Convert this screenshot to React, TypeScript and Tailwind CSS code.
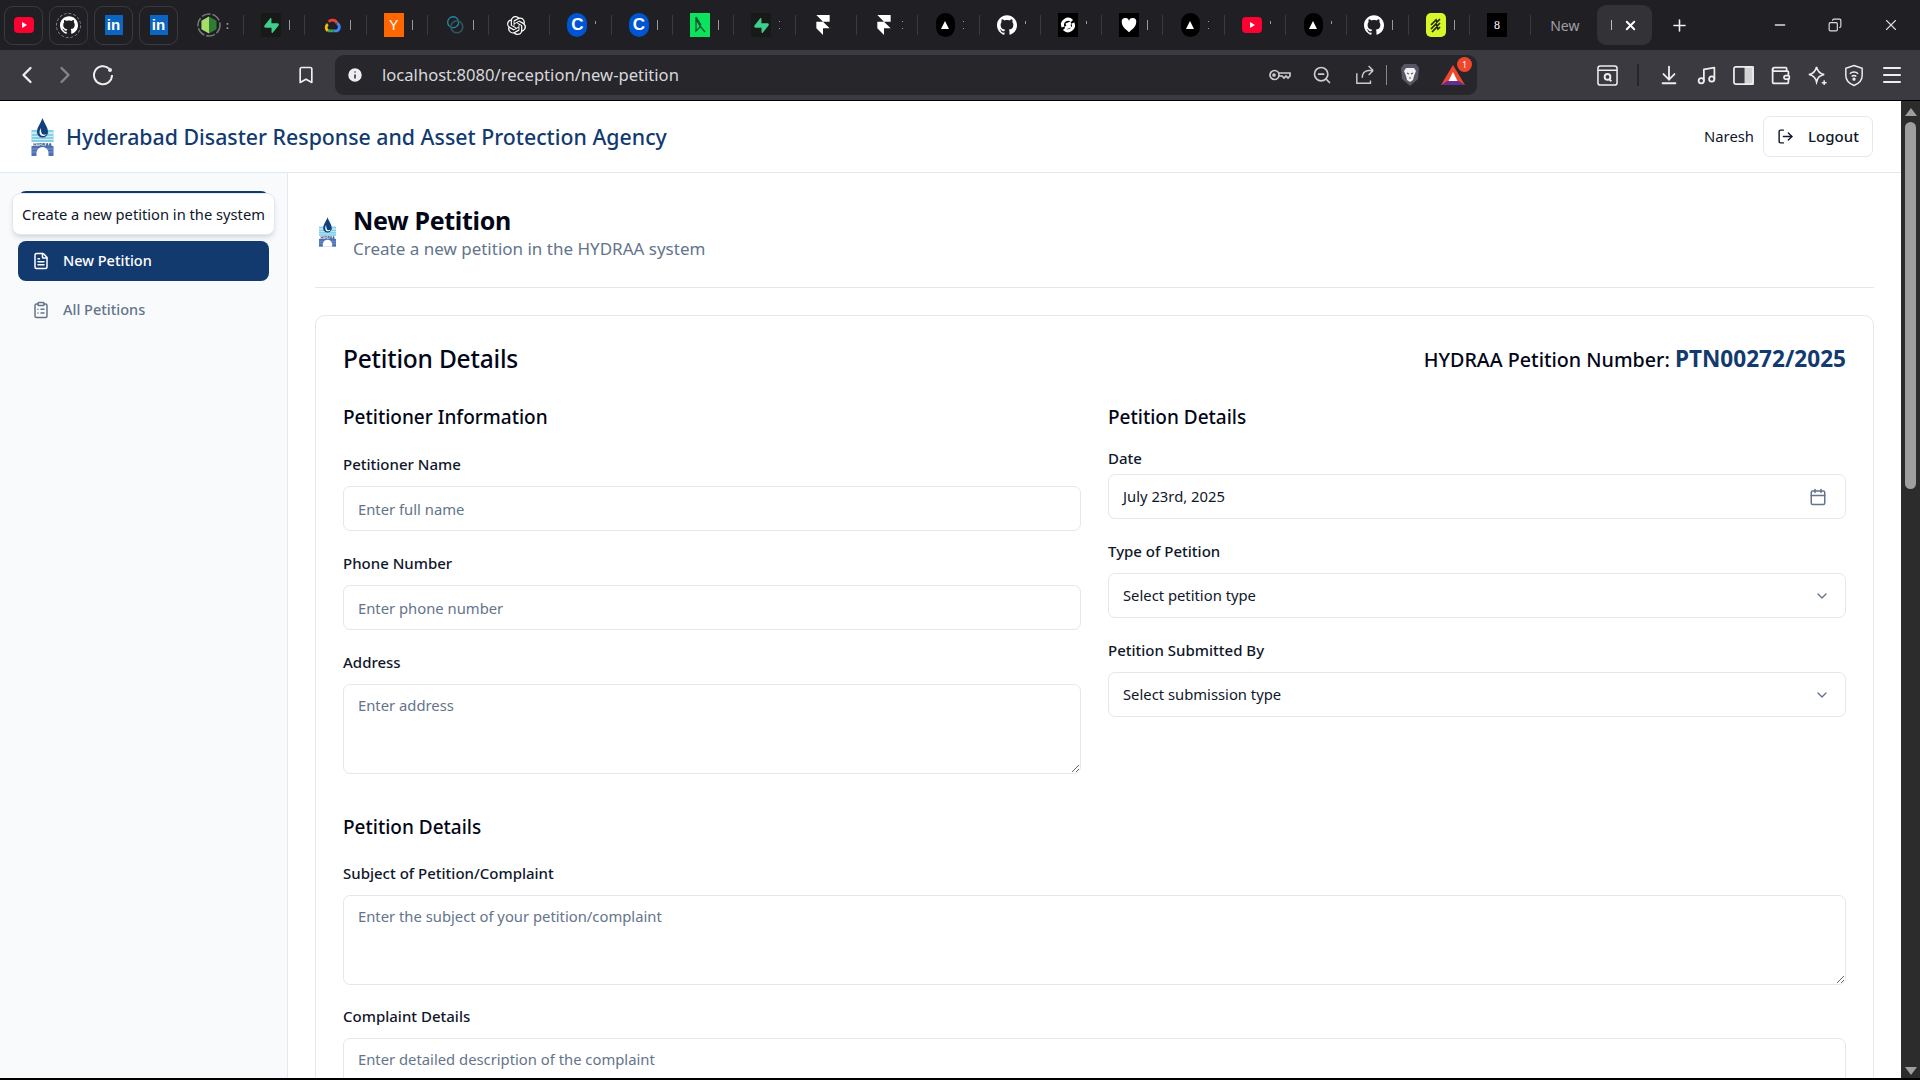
import React from 'react';
import {
  ArrowDownToLine,
  Calendar,
  ChevronDown,
  ChevronLeft,
  ChevronRight,
  ClipboardList,
  FileText,
  Info,
  LogOut,
  Menu,
  Minus,
  Music,
  Plus,
  Bookmark,
  Wallet,
  X,
  ZoomOut,
  Copy,
} from 'lucide-react';
import { SiFramer, SiGithub, SiOpenai, SiSupabase } from 'react-icons/si';

const navy = 'text-[#123a6f]';

const Youtube = () => (
  <svg viewBox="0 0 20 16" className="w-[20px] h-[16px]">
    <rect width="20" height="16" rx="4" fill="#ff0033" />
    <path d="M8 5l5 3-5 3z" fill="#fff" />
  </svg>
);

const Linkedin = () => (
  <span className="w-[18px] h-[20px] bg-[#0a66c2] text-white text-[15px] font-bold leading-[20px] text-center font-['Liberation_Sans',sans-serif]">
    in
  </span>
);

const Triangle = () => (
  <span className="w-[19px] h-[24px] rounded-full bg-black flex items-center justify-center">
    <svg viewBox="0 0 10 10" className="w-[10px] h-[10px]">
      <path d="M5 1l4 8H1z" fill="#fff" />
    </svg>
  </span>
);

const Node = () => (
  <svg viewBox="0 0 24 24" className="w-[24px] h-[24px] shrink-0">
    <circle cx="12" cy="12" r="11" fill="none" stroke="#777" strokeWidth="1.6" strokeDasharray="9 2" />
    <path d="M12 3.5l7.5 4.2v8.6L12 20.5l-7.5-4.2V7.700z" fill="#2f7d32" />
    <path d="M12 3.500v17l-7.500-4.200V7.700z" fill="#a5dc6a" />
  </svg>
);

const GoogleCloud = () => (
  <svg viewBox="0 0 24 20" className="w-[20px] h-[18px]">
    <path d="M8 6a6 6 0 0 1 10 2" fill="none" stroke="#ea4335" strokeWidth="3.4" />
    <path d="M18 8a5 5 0 0 1 0 9h-4" fill="none" stroke="#4285f4" strokeWidth="3.4" />
    <path d="M14 17H7" fill="none" stroke="#34a853" strokeWidth="3.4" />
    <path d="M7 17a5 5 0 0 1 0-8" fill="none" stroke="#fbbc05" strokeWidth="3.4" />
  </svg>
);

const Rings = () => (
  <svg viewBox="0 0 20 24" className="w-[20px] h-[22px]" fill="none">
    <circle cx="8" cy="9" r="6" stroke="#1f8fa8" strokeWidth="1.4" />
    <circle cx="12" cy="14" r="6.500" stroke="#34505f" strokeWidth="1.8" />
  </svg>
);

const Square = ({ bg, color, children }: { bg: string; color?: string; children: React.ReactNode }) => (
  <span
    className="w-[20px] h-[24px] flex items-center justify-center text-[12px] font-['Liberation_Serif',serif]"
    style={{ background: bg, color }}
  >
    {children}
  </span>
);

const Supabase = () => (
  <Square bg="#181a18" color="#3ecf8e">
    <SiSupabase size={15} />
  </Square>
);

const Coursera = () => (
  <span className="w-[20px] h-[24px] rounded-full bg-[#0056d2] flex items-center justify-center text-white text-[17px] font-bold font-['Liberation_Sans',sans-serif]">
    C
  </span>
);

const Github = () => <SiGithub size={20} color="#fff" />;
const Framer = () => <SiFramer size={20} color="#fff" />;

const PyCharmLike = () => (
  <Square bg="#0ce35c">
    <svg viewBox="0 0 20 24" className="w-[20px] h-[24px]" fill="none" stroke="#14532d" strokeWidth="1.3">
      <path d="M6 4v14l5-5M6 6l4 7 5 6M6 4l5 8" />
    </svg>
  </Square>
);

const Swirl = () => (
  <Square bg="#000">
    <svg viewBox="0 0 20 24" className="w-[20px] h-[24px]" fill="none" stroke="#fff" strokeWidth="3">
      <path d="M5 14a5.500 5.500 0 0 1 9-6M15 10a5.500 5.500 0 0 1-9 6M8 12l5-2M7 15l6-2" />
    </svg>
  </Square>
);

const Heart = () => (
  <Square bg="#000">
    <svg viewBox="0 0 20 24" className="w-[18px] h-[22px]">
      <path d="M10 20C5 16 2 13 2 9a4 4 0 0 1 8-1.500A4 4 0 0 1 18 9c0 4-3 7-8 11z" fill="#fff" />
    </svg>
  </Square>
);

const Lime = () => (
  <span className="w-[20px] h-[24px] rounded-[5px] bg-[#d7f72a] flex items-center justify-center">
    <svg viewBox="0 0 20 24" className="w-[20px] h-[24px]" fill="none" stroke="#1f2a10" strokeWidth="1.700">
      <path d="M5 12l5-5 1 2 3-3M5 16l5-5 1 2 3-3M6 19l5-5 1 2 2-2" />
    </svg>
  </span>
);

type Tail = 'bar' | 'dots' | 'tick' | 'none';

const tabs: { icon: React.ReactNode; tail: Tail }[] = [
  { icon: <Supabase />, tail: 'bar' },
  { icon: <GoogleCloud />, tail: 'bar' },
  { icon: <Square bg="#ff6600" color="#fff"><span className="font-['Liberation_Sans',sans-serif] text-[14px]">Y</span></Square>, tail: 'bar' },
  { icon: <Rings />, tail: 'bar' },
  { icon: <SiOpenai size={19} color="#fff" />, tail: 'none' },
  { icon: <Coursera />, tail: 'tick' },
  { icon: <Coursera />, tail: 'bar' },
  { icon: <PyCharmLike />, tail: 'bar' },
  { icon: <Supabase />, tail: 'dots' },
  { icon: <Framer />, tail: 'none' },
  { icon: <Framer />, tail: 'dots' },
  { icon: <Triangle />, tail: 'dots' },
  { icon: <Github />, tail: 'tick' },
  { icon: <Swirl />, tail: 'tick' },
  { icon: <Heart />, tail: 'bar' },
  { icon: <Triangle />, tail: 'dots' },
  { icon: <Youtube />, tail: 'tick' },
  { icon: <Triangle />, tail: 'tick' },
  { icon: <Github />, tail: 'bar' },
  { icon: <Lime />, tail: 'bar' },
  { icon: <Square bg="#000" color="#fff">8</Square>, tail: 'none' },
];

const Pinned = ({ children }: { children: React.ReactNode }) => (
  <div className="w-[39px] h-[39px] shrink-0 rounded-[9px] border border-[#3a3a40] flex items-center justify-center">
    {children}
  </div>
);

const TabStrip = () => (
  <div className="h-[50px] bg-[#1f1f24] flex items-center pl-[4px] text-white overflow-hidden">
    <div className="flex gap-[6px]">
      <Pinned>
        <Youtube />
      </Pinned>
      <Pinned>
        <span className="w-[25px] h-[25px] rounded-full border border-dashed border-[#888] flex items-center justify-center">
          <SiGithub size={18} color="#fff" />
        </span>
      </Pinned>
      <Pinned>
        <Linkedin />
      </Pinned>
      <Pinned>
        <Linkedin />
      </Pinned>
    </div>
    <div className="w-[30px] ml-[19px] flex items-center gap-[5px] shrink-0">
      <Node />
      <span className="text-[#aaa] text-[10px] font-bold">:</span>
    </div>
    <div className="flex ml-[16px]">
      {tabs.map((tab, idx) => (
        <div key={idx} className="w-[61.3px] h-[20px] shrink-0 flex items-center pl-[17px] border-l border-[#3a3a40]">
          <span className="w-[20px] flex items-center justify-center">{tab.icon}</span>
          {tab.tail === 'bar' && <span className="ml-[8px] w-[1px] h-[10px] bg-[#999]" />}
          {tab.tail === 'dots' && <span className="ml-[8px] w-[1px] h-[8px] border-y border-[#999]" />}
          {tab.tail === 'tick' && <span className="ml-[8px] mb-[6px] w-[1px] h-[3px] bg-[#999]" />}
        </div>
      ))}
    </div>
    <div className="w-[67px] h-[20px] shrink-0 border-l border-[#3a3a40] pl-[19px] flex items-center text-[#a0a0a4] text-[14px] overflow-hidden">
      New
    </div>
    <div className="w-[55px] h-[40px] shrink-0 rounded-[9px] bg-[#323237] flex items-center pl-[14px] gap-[11px] text-white">
      <span className="w-[1px] h-[10px] bg-[#bbb]" />
      <X size={15} strokeWidth={3} />
    </div>
    <Plus size={19} className="ml-[18px] shrink-0 text-[#eee]" />
    <div className="ml-auto flex items-center gap-[40px] pr-[20px] text-[#ddd]">
      <Minus size={16} />
      <Copy size={14} className="-scale-x-100" />
      <X size={18} strokeWidth={1.5} />
    </div>
  </div>
);

const Reload = () => (
  <svg viewBox="0 0 22 22" className="w-[22px] h-[22px]" fill="none" stroke="currentColor" strokeWidth="2">
    <path d="M17 4.500A9 9 0 1 0 20 11" />
    <circle cx="18" cy="6" r="2" fill="currentColor" stroke="none" />
  </svg>
);

const Key = () => (
  <svg viewBox="0 0 24 14" className="w-[24px] h-[14px]" fill="none" stroke="currentColor" strokeWidth="1.700">
    <circle cx="6.500" cy="7" r="4.500" />
    <circle cx="6" cy="7" r="1" />
    <path d="M11 5h11v3l-2 2-2-2-2 2-2-2h-3" />
  </svg>
);

const ShareBox = () => (
  <svg viewBox="0 0 22 22" className="w-[20px] h-[20px]" fill="none" stroke="currentColor" strokeWidth="1.600">
    <path d="M2 9v11h15v-3M20 6l-5-5M20 6l-5 5M20 6h-5c-5 0-7 4-7 8" />
  </svg>
);

const Lion = () => (
  <svg viewBox="0 0 20 24" className="w-[20px] h-[24px]">
    <path d="M4 1h12l3 4-1 11-8 7-8-7L1 5z" fill="#565664" />
    <path d="M6 5h8l2 3-2 5-1 4-3 2-3-2-1-4-2-5z" fill="#f1f1f3" />
    <path d="M7 10l2 1M13 10l-2 1M9 15h2" stroke="#565664" strokeWidth="1.200" />
  </svg>
);

const Reader = () => (
  <svg viewBox="0 0 22 22" className="w-[21px] h-[21px]" fill="none" stroke="currentColor" strokeWidth="1.600">
    <rect x="1" y="1" width="20" height="20" rx="2.500" />
    <path d="M1 5.500h20" />
    <circle cx="11" cy="12.500" r="3" strokeWidth="2" />
    <path d="M13 15l2 2" strokeWidth="2" />
  </svg>
);

const Panel = () => (
  <svg viewBox="0 0 22 22" className="w-[21px] h-[21px]" fill="none" stroke="currentColor" strokeWidth="1.800">
    <rect x="1" y="2" width="20" height="18" rx="2" />
    <rect x="13" y="2" width="8" height="18" fill="currentColor" opacity="0.85" />
  </svg>
);

const Star = () => (
  <svg viewBox="0 0 22 22" className="w-[21px] h-[21px]" fill="none" stroke="currentColor" strokeWidth="1.700">
    <path d="M10 2c1 5 3 7 8 8-4 1-6 2-7 5l-1 3c-1-5-3-7-8-8 5-1 7-3 8-8z" />
    <path d="M18 16v5M15.500 18.500h5" strokeWidth="1.500" />
  </svg>
);

const ShieldWifi = () => (
  <svg viewBox="0 0 22 24" className="w-[20px] h-[23px]" fill="none" stroke="currentColor" strokeWidth="1.600">
    <path d="M11 1l9 3v8c0 5-4 9-9 11-5-2-9-6-9-11V4z" />
    <path d="M6.500 10a6.500 6.500 0 0 1 9 0M8.500 13a3.500 3.500 0 0 1 5 0" />
    <circle cx="11" cy="16" r="1" fill="currentColor" />
  </svg>
);

const Toolbar = () => (
  <div className="h-[50px] bg-[#3a3a40] flex items-center text-[#eee]">
    <div className="w-[335px] shrink-0 flex items-center pl-[13px]">
      <ChevronLeft size={28} strokeWidth={2} />
      <ChevronRight size={28} strokeWidth={2} className="ml-[10px] text-[#85858a]" />
      <span className="ml-[13px] flex">
        <Reload />
      </span>
      <Bookmark size={20} className="ml-auto mr-[19px]" />
    </div>
    <div className="w-[1142px] h-[40px] shrink-0 rounded-[9px] bg-[#26262b] flex items-center pl-[11px] pr-[12px]">
      <Info size={18} fill="#eee" stroke="#26262b" />
      <span className="ml-[18px] text-[16.6px] text-[#d8d8dc]">localhost:8080/reception/new-petition</span>
      <div className="ml-auto flex items-center text-[#ccc]">
        <Key />
        <ZoomOut size={20} className="ml-[20px]" />
        <span className="ml-[23px] flex">
          <ShareBox />
        </span>
        <span className="ml-[11px] w-[1px] h-[20px] bg-[#888]" />
        <span className="ml-[13px] flex">
          <Lion />
        </span>
        <span className="relative ml-[21px] flex">
          <svg viewBox="0 0 24 22" className="w-[24px] h-[22px]">
            <path d="M12 1l12 20H0z" fill="#f0462c" />
            <path d="M12 8l6 12H6z" fill="#fff" />
            <path d="M0 21l6-4h12l6 4z" fill="#662d91" />
          </svg>
          <span className="absolute -top-[7px] -right-[7px] w-[15px] h-[15px] rounded-full bg-[#f0462c] text-white text-[9px] leading-[15px] text-center">
            1
          </span>
        </span>
      </div>
    </div>
    <div className="flex-1 flex items-center justify-end pr-[16px] gap-[16px]">
      <Reader />
      <span className="w-[2px] h-[22px] bg-[#26262b] mx-[3px]" />
      <ArrowDownToLine size={22} />
      <Music size={21} />
      <Panel />
      <Wallet size={21} />
      <Star />
      <ShieldWifi />
      <Menu size={24} />
    </div>
  </div>
);

const Logo = ({ className }: { className: string }) => (
  <svg viewBox="0 0 22 38" className={className}>
    <rect y="12" width="22" height="13" fill="#86cfe8" />
    <path d="M0 14h5v2H0zM17 14h5v2h-5zM0 18h22v1H0zM0 21h22v1H0z" fill="#c9ebf5" />
    <path d="M11 0c2 6 5.500 9 5.500 14a5.500 5.500 0 0 1-11 0C5.500 9 9 6 11 0z" fill="#12407d" />
    <path d="M9 10c-1 3-1.500 5 0 7 2 2 5 1 6-1-2 1-4 1-5-1-.500-1.500-.500-3-1-5z" fill="#fff" />
    <rect y="24" width="22" height="4" fill="#fff" />
    <text x="11" y="27.500" textAnchor="middle" fontSize="4.300" fontWeight="700" fill="#12407d" fontFamily="Liberation Sans">
      HYDRAA
    </text>
    <rect y="28" width="22" height="10" fill="#4f6fb5" />
    <path d="M0 31h22M0 34h22" stroke="#8aa2d4" strokeWidth="0.800" />
    <path d="M5 38v-3a6 6 0 0 1 12 0v3z" fill="#fff" />
  </svg>
);

const Header = () => (
  <header className="h-[72px] shrink-0 border-b border-[#e2e8f0] flex items-center pl-[31px] pr-[28px] bg-white">
    <Logo className="w-[23px] h-[38px]" />
    <h1 className={`ml-[12px] pt-[1px] text-[21.3px] font-medium ${navy}`}>Hyderabad Disaster Response and Asset Protection Agency</h1>
    <span className="ml-auto text-[14.8px] text-[#0f172a]">Naresh</span>
    <button className="ml-[9px] h-[41px] w-[110px] rounded-[7px] border border-[#e2e8f0] flex items-center justify-center gap-[14px] text-[15px] font-medium text-[#0f172a]">
      <LogOut size={17} />
      Logout
    </button>
  </header>
);

const Sidebar = () => (
  <aside className="relative w-[288px] shrink-0 border-r border-[#e2e8f0] bg-[#f8fafc] px-[18px] pt-[18px] flex flex-col gap-[10px]">
    <div className="h-[40px] rounded-[8px] bg-[#123a6f]" />
    <div className="h-[40px] rounded-[8px] bg-[#123a6f] flex items-center gap-[13px] pl-[14px] text-white text-[14.5px] font-medium">
      <FileText size={18} />
      New Petition
    </div>
    <div className="h-[40px] mt-[-1px] rounded-[8px] flex items-center gap-[13px] pl-[14px] text-[#64748b] text-[14.5px] font-medium">
      <ClipboardList size={18} />
      All Petitions
    </div>
    <div className="absolute left-[12px] top-[20px] w-[263px] h-[42px] rounded-[8px] border border-[#e2e8f0] bg-white shadow-md flex items-center justify-center text-[14.7px] text-[#0f172a]">
      Create a new petition in the system
    </div>
  </aside>
);

const fieldClass =
  'w-full rounded-[7px] border border-[#e2e8f0] bg-white px-[14px] text-[14.800px] text-[#0f172a] placeholder:text-[#64748b] outline-none';

const Field = ({ label, children }: { label: string; children: React.ReactNode }) => (
  <div>
    <label className="block text-[15px] font-medium leading-[22px] text-[#0f172a] mb-[11px]">{label}</label>
    {children}
  </div>
);

const TextInput = ({ placeholder }: { placeholder: string }) => (
  <input placeholder={placeholder} className={`${fieldClass} h-[45px]`} />
);

const TextArea = ({ placeholder }: { placeholder: string }) => (
  <textarea placeholder={placeholder} className={`${fieldClass} block h-[90px] py-[8px] leading-[24px]`} />
);

const SelectBox = ({ children }: { children: React.ReactNode }) => (
  <div className={`${fieldClass} h-[45px] flex items-center justify-between pr-[15px]`}>
    {children}
    <ChevronDown size={16} className="text-[#64748b]" />
  </div>
);

const App = () => (
  <div className="h-[1080px] overflow-hidden bg-black font-['Noto_Sans',sans-serif] flex flex-col">
    <TabStrip />
    <Toolbar />
    <div className="h-[977px] flex bg-white mt-[1px]">
      <div className="flex-1 min-w-0 flex flex-col">
        <Header />
        <div className="flex-1 min-h-0 flex overflow-hidden">
          <Sidebar />
          <main className="flex-1 min-w-0 px-[27px] pt-[29px]">
            <div className="flex items-center h-[60px] box-content border-b border-[#e2e8f0] pb-[25px]">
              <Logo className="w-[17px] h-[30px] ml-[4px]" />
              <div className="ml-[17px]">
                <h2 className="text-[25px] leading-[34px] font-bold tracking-[-0.3px] text-[#020617]">New Petition</h2>
                <p className="text-[17px] leading-[24px] text-[#64748b]">Create a new petition in the HYDRAA system</p>
              </div>
            </div>
            <section className="mt-[27px] rounded-[10px] border border-[#e2e8f0] bg-white px-[27px] pt-[23px] h-[800px]">
              <div className="flex items-center justify-between h-[40px]">
                <h3 className="text-[24.500px] font-medium tracking-[-0.2px] text-[#020617]">Petition Details</h3>
                <p className="text-[19.700px] font-medium text-[#020617]">
                  HYDRAA Petition Number: <span className={`text-[22.600px] font-bold ${navy}`}>PTN00272/2025</span>
                </p>
              </div>
              <div className="grid grid-cols-2 gap-[27px] mt-[24px]">
                <div className="flex flex-col gap-[21px]">
                  <h4 className="text-[19px] leading-[28px] font-medium text-[#020617] mb-[1px]">Petitioner Information</h4>
                  <Field label="Petitioner Name">
                    <TextInput placeholder="Enter full name" />
                  </Field>
                  <Field label="Phone Number">
                    <TextInput placeholder="Enter phone number" />
                  </Field>
                  <Field label="Address">
                    <TextArea placeholder="Enter address" />
                  </Field>
                </div>
                <div className="flex flex-col gap-[21px]">
                  <h4 className="text-[19px] leading-[28px] font-medium text-[#020617] mb-[-5px]">Petition Details</h4>
                  <Field label="Date">
                    <div className={`${fieldClass} h-[45px] flex items-center justify-between pr-[18px] mt-[-6px]`}>
                      July 23rd, 2025
                      <Calendar size={18} className="text-[#64748b]" />
                    </div>
                  </Field>
                  <Field label="Type of Petition">
                    <SelectBox>Select petition type</SelectBox>
                  </Field>
                  <Field label="Petition Submitted By">
                    <SelectBox>Select submission type</SelectBox>
                  </Field>
                </div>
              </div>
              <h4 className="mt-[39px] text-[19px] leading-[28px] font-medium text-[#020617]">Petition Details</h4>
              <div className="mt-[21px] flex flex-col gap-[20px]">
                <Field label="Subject of Petition/Complaint">
                  <TextArea placeholder="Enter the subject of your petition/complaint" />
                </Field>
                <Field label="Complaint Details">
                  <TextArea placeholder="Enter detailed description of the complaint" />
                </Field>
              </div>
            </section>
          </main>
        </div>
      </div>
      {/* scrollbar */}
      <div className="w-[19px] shrink-0 bg-[#2c2c2c] flex flex-col items-center pt-[7px]">
        <span className="w-0 h-0 border-x-[6px] border-x-transparent border-b-[8px] border-b-[#9f9f9f]" />
        <span className="mt-[6px] w-[11px] h-[367px] rounded-full bg-[#9f9f9f]" />
        <span className="mt-auto mb-[3px] w-0 h-0 border-x-[6px] border-x-transparent border-t-[8px] border-t-[#9f9f9f]" />
      </div>
    </div>
  </div>
);

export default App;
